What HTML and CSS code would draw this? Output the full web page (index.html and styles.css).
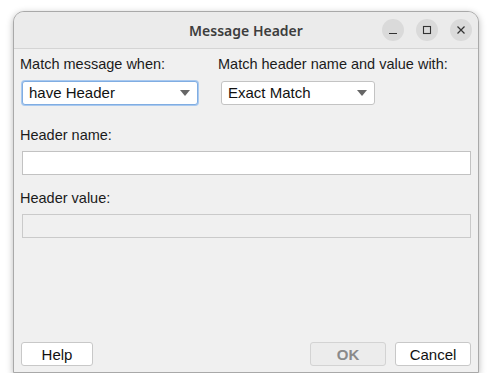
FILE: index.html
```html
<!DOCTYPE html>
<html lang="en">
<head>
  <meta charset="UTF-8" />
  <title>Message Header</title>
  <link rel="stylesheet" href="styles.css">
</head>
<body>

  <!-- Dialog -->
  <div class="dialog">
    <div class="titlebar">
      <span class="title">Message Header</span>
      <div class="win-buttons">
        <span class="win-btn">
          <svg width="10" height="10" viewBox="0 0 10 10"><path d="M1 8.5h8" stroke="#333" stroke-width="1.2"/></svg>
        </span>
        <span class="win-btn">
          <svg width="10" height="10" viewBox="0 0 10 10"><rect x="1.5" y="1.5" width="7" height="7" fill="none" stroke="#333" stroke-width="1.1"/></svg>
        </span>
        <span class="win-btn">
          <svg width="10" height="10" viewBox="0 0 10 10"><path d="M1.5 1.5l7 7M8.5 1.5l-7 7" stroke="#333" stroke-width="1.2"/></svg>
        </span>
      </div>
    </div>

    <div class="content">
      <div class="row">
        <div class="col col-left">
          <label>Match message when:</label>
          <div class="combo focused combo-left">
            <span>have Header</span>
            <span class="arrow"></span>
          </div>
        </div>
        <div class="col">
          <label>Match header name and value with:</label>
          <div class="combo combo-right">
            <span>Exact Match</span>
            <span class="arrow"></span>
          </div>
        </div>
      </div>

      <label class="field-label">Header name:</label>
      <div class="textfield"></div>

      <label class="field-label">Header value:</label>
      <div class="textfield disabled"></div>

      <div class="footer">
        <button class="btn btn-help">Help</button>
        <span class="spacer"></span>
        <button class="btn btn-ok" disabled>OK</button>
        <button class="btn btn-cancel">Cancel</button>
      </div>
    </div>
  </div>

</body>
</html>
```

FILE: styles.css
```css
/* General */
body {
  background: #fff;
  margin: 0;
  padding: 0;
  font-family: "Liberation Sans", Arial, sans-serif;
  font-size: 14.5px;
  color: #1b1b1b;
}

/* Window */
.dialog {
  width: 466px;
  height: 362px;
  box-sizing: border-box;
  margin: 11px 0 0 13px;
  border: 1px solid #a9a9a9;
  border-radius: 11px 11px 0 0;
  background: #f0f0f0;
  box-shadow: 0 2px 7px rgba(0,0,0,0.28);
  display: flex;
  flex-direction: column;
  overflow: hidden;
}

/* Title bar */
.titlebar {
  height: 37px;
  box-sizing: border-box;
  background: #ebebeb;
  border-bottom: 1px solid #d4d4d4;
  display: flex;
  align-items: center;
  justify-content: center;
  position: relative;
}
.title {
  font-family: "Noto Sans", sans-serif;
  font-weight: 600;
  font-size: 14px;
  color: #3d3d3d;
}
.win-buttons {
  position: absolute;
  right: 6px;
  top: 7px;
  display: flex;
  gap: 12px;
}
.win-btn {
  width: 22px;
  height: 22px;
  border-radius: 50%;
  background: #dadada;
  display: flex;
  align-items: center;
  justify-content: center;
}

/* Content */
.content {
  flex: 1;
  display: flex;
  flex-direction: column;
  padding: 6px 7px 6px 6px;
}
label {
  display: block;
  line-height: 18px;
}
.row {
  display: flex;
}
.col-left {
  width: 198px;
}

/* Combo boxes */
.combo {
  margin-top: 8px;
  margin-left: 2px;
  height: 24px;
  box-sizing: border-box;
  background: #fff;
  border: 1px solid #c3c3c3;
  border-radius: 3px;
  display: flex;
  align-items: center;
  justify-content: space-between;
  padding: 0 7px 1px 6px;
  font-size: 15px;
  color: #111;
}
.combo.focused {
  border: 1px solid #80ade2;
  box-shadow: 0 0 0 1px #a9c9ef;
}
.combo-left {
  width: 176px;
}
.combo-right {
  width: 154px;
  margin-left: 3px;
}
.arrow {
  width: 0;
  height: 0;
  border-left: 5px solid transparent;
  border-right: 5px solid transparent;
  border-top: 6px solid #666;
}

/* Text fields */
.field-label {
  margin-top: 21px;
}
.field-label + .textfield {
  margin-top: 7px;
}
.textfield {
  margin-left: 2px;
  height: 24px;
  box-sizing: border-box;
  background: #fff;
  border: 1px solid #c2c2c2;
}
.textfield.disabled {
  background: #f0f0f0;
  border-color: #cacaca;
}
.textfield + .field-label {
  margin-top: 14px;
}

/* Footer */
.footer {
  margin-top: auto;
  display: flex;
  align-items: center;
}
.spacer {
  flex: 1;
}
.btn {
  height: 24px;
  box-sizing: border-box;
  background: #fff;
  border: 1px solid #c8c8c8;
  border-radius: 3px;
  font-family: "Liberation Sans", Arial, sans-serif;
  font-size: 15px;
  color: #111;
  padding: 0;
}
.btn-help {
  width: 72px;
  margin-left: 1px;
}
.btn-ok {
  width: 76px;
  background: #ececec;
  border-color: #d3d3d3;
  color: #8a8a8a;
  font-weight: bold;
}
.btn-cancel {
  width: 76px;
  margin-left: 9px;
}
```
